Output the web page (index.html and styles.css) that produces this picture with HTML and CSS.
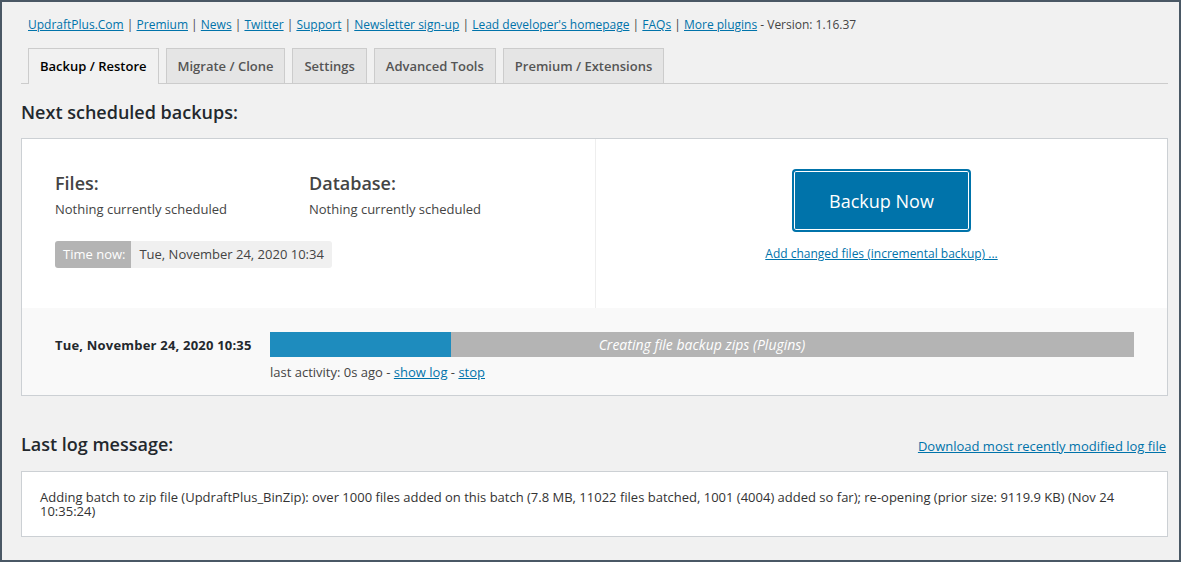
FILE: index.html
```html
<!doctype html>
<html lang="en">
<head>
    <meta charset="UTF-8">
    <title>UpdraftPlus Backup / Restore</title>
    <link rel="stylesheet" href="styles.css">
</head>
<body>
<div class="frame">
    <div class="wrap">
        <div class="top-links">
            <a href="#">UpdraftPlus.Com</a> | <a href="#">Premium</a> | <a href="#">News</a> | <a href="#">Twitter</a> | <a href="#">Support</a> | <a href="#">Newsletter sign-up</a> | <a href="#">Lead developer's homepage</a> | <a href="#">FAQs</a> | <a href="#">More plugins</a> - Version: 1.16.37
        </div>

        <div class="tabs">
            <a class="tabs__item tabs__item_active" href="#">Backup / Restore</a>
            <a class="tabs__item" href="#">Migrate / Clone</a>
            <a class="tabs__item" href="#">Settings</a>
            <a class="tabs__item" href="#">Advanced Tools</a>
            <a class="tabs__item" href="#">Premium / Extensions</a>
        </div>

        <h2 class="section-title">Next scheduled backups:</h2>

        <div class="box">
            <div class="box__top">
                <div class="schedule">
                    <div class="schedule__cols">
                        <div class="schedule__col">
                            <h3 class="schedule__title">Files:</h3>
                            <div class="schedule__text">Nothing currently scheduled</div>
                        </div>
                        <div class="schedule__col">
                            <h3 class="schedule__title">Database:</h3>
                            <div class="schedule__text">Nothing currently scheduled</div>
                        </div>
                    </div>
                    <div class="time-now">
                        <span class="time-now__label">Time now:</span>
                        <span class="time-now__value">Tue, November 24, 2020 10:34</span>
                    </div>
                </div>
                <div class="backup-now">
                    <button class="backup-now__btn">Backup Now</button>
                    <a class="backup-now__link" href="#">Add changed files (incremental backup) ...</a>
                </div>
            </div>
            <div class="box__bottom">
                <div class="job__date">Tue, November 24, 2020 10:35</div>
                <div class="job__info">
                    <div class="progress">
                        <div class="progress__fill" style="width: 21%"></div>
                        <div class="progress__text">Creating file backup zips (Plugins)</div>
                    </div>
                    <div class="job__activity">last activity: 0s ago - <a href="#">show log</a> - <a href="#">stop</a></div>
                </div>
            </div>
        </div>

        <div class="log-head">
            <h2 class="section-title">Last log message:</h2>
            <a href="#">Download most recently modified log file</a>
        </div>

        <div class="log-box">
            Adding batch to zip file (UpdraftPlus_BinZip): over 1000 files added on this batch (7.8 MB, 11022 files batched, 1001 (4004) added so far); re-opening (prior size: 9119.9 KB) (Nov 24 10:35:24)
        </div>
    </div>
</div>
</body>
</html>
```

FILE: styles.css
```css
html, body {
    margin: 0;
    padding: 0;
}

body {
    font-family: "Open Sans", "Noto Sans", sans-serif;
    font-size: 13px;
    color: #444;
    background-color: #4a5865;
}

a {
    color: #0073aa;
}

.frame {
    box-sizing: border-box;
    height: 100vh;
    border: 2px solid #4a5865;
    background-color: #f1f1f1;
    overflow: hidden;
}

.wrap {
    padding: 0 11px 0 19px;
}

.top-links {
    padding: 14px 0 0 7px;
    height: 18px;
    font-size: 12px;
    line-height: 18px;
    color: #444;
}

.tabs {
    display: flex;
    gap: 7px;
    margin-top: 14px;
    padding-left: 7px;
    border-bottom: 1px solid #ccc;
    height: 35px;
}

.tabs__item {
    box-sizing: border-box;
    height: 35px;
    padding: 0 11px;
    border: 1px solid #ccc;
    border-bottom: none;
    background-color: #e5e5e5;
    color: #555;
    font-size: 13px;
    font-weight: 600;
    line-height: 34px;
    text-decoration: none;
}

.tabs__item_active {
    height: 36px;
    background-color: #f1f1f1;
    color: #000;
}

.section-title {
    margin: 0;
    font-size: 18px;
    font-weight: 600;
    color: #23282d;
    line-height: 24px;
}

.wrap > .section-title {
    margin-top: 16px;
}

.box {
    margin-top: 14px;
    border: 1px solid #ccd0d4;
    background-color: #fff;
}

.box__top {
    display: flex;
    height: 169px;
}

.schedule {
    box-sizing: border-box;
    width: 574px;
    padding: 32px 0 0 33px;
    border-right: 1px solid #eee;
}

.schedule__cols {
    display: flex;
}

.schedule__col {
    width: 254px;
}

.schedule__title {
    margin: 0;
    font-size: 18px;
    font-weight: 600;
    color: #444;
    line-height: 24px;
}

.schedule__text {
    margin-top: 5px;
    line-height: 18px;
}

.time-now {
    display: inline-flex;
    margin-top: 23px;
    height: 27px;
    line-height: 27px;
    border-radius: 3px;
    overflow: hidden;
}

.time-now__label {
    padding: 0 6px 0 8px;
    background-color: #b4b4b4;
    color: #fff;
}

.time-now__value {
    padding: 0 8px;
    background-color: #f0f0f0;
    color: #444;
}

.backup-now {
    flex: 1;
    display: flex;
    flex-direction: column;
    align-items: center;
    padding-top: 30px;
}

.backup-now__btn {
    box-sizing: border-box;
    width: 179px;
    height: 63px;
    border: 2px solid #0073aa;
    border-radius: 4px;
    background-color: #0073aa;
    box-shadow: inset 0 0 0 1px #fff;
    color: #fff;
    font-family: inherit;
    font-size: 18px;
    cursor: pointer;
}

.backup-now__link {
    margin-top: 14px;
    font-size: 12px;
    line-height: 16px;
}

.box__bottom {
    display: flex;
    align-items: flex-start;
    height: 87px;
    padding: 24px 33px 0 33px;
    box-sizing: border-box;
    background-color: #f9f9f9;
}

.job__date {
    width: 215px;
    padding-top: 4px;
    font-weight: 700;
    color: #23282d;
    line-height: 18px;
    letter-spacing: 0.2px;
}

.job__info {
    flex: 1;
}

.progress {
    position: relative;
    height: 25px;
    background-color: #b4b4b4;
}

.progress__fill {
    height: 100%;
    background-color: #1e8cbe;
}

.progress__text {
    position: absolute;
    top: 0;
    left: 0;
    right: 0;
    text-align: center;
    line-height: 25px;
    color: #fff;
    font-size: 14px;
    font-style: italic;
}

.job__activity {
    margin-top: 6px;
    line-height: 18px;
}

.log-head {
    display: flex;
    justify-content: space-between;
    align-items: baseline;
    margin-top: 36px;
}

.log-head a {
    margin-right: 2px;
}

.log-box {
    margin-top: 15px;
    padding: 18px 18px 18px 18px;
    border: 1px solid #ccd0d4;
    background-color: #fff;
    color: #333;
    line-height: 14px;
}
```
